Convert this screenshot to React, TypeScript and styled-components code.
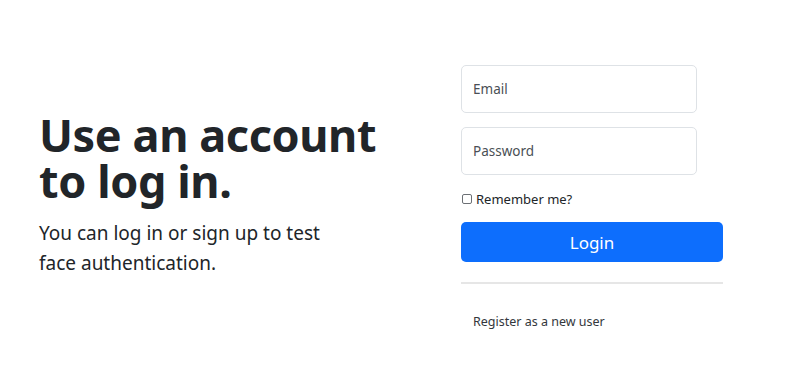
import styled, { createGlobalStyle } from 'styled-components';

const GlobalStyle = createGlobalStyle`
  html, body {
    margin: 0;
    padding: 0;
    background: #ffffff;
  }
  body {
    font-family: "Noto Sans", "Open Sans", sans-serif;
    color: #212529;
  }
  * {
    box-sizing: border-box;
  }
`;

const Page = styled.div`
  width: 806px;
  height: 384px;
  display: flex;
  padding: 65px 0 0 39px;
`;

const Intro = styled.div`
  width: 422px;
  padding-top: 47px;
`;

const Heading = styled.h1`
  margin: 0;
  max-width: 360px;
  font-size: 45px;
  line-height: 46px;
  font-weight: 700;
  letter-spacing: -0.4px;
  color: #212529;
`;

const Lead = styled.p`
  margin: 14px 0 0;
  max-width: 300px;
  font-size: 19px;
  line-height: 30px;
  font-weight: 400;
  color: #212529;
`;

const FormColumn = styled.div`
  width: 262px;
  display: flex;
  flex-direction: column;
`;

const Field = styled.div`
  width: 236px;
  height: 48px;
  border: 1px solid #dee2e6;
  border-radius: 5px;
  display: flex;
  align-items: center;
  padding: 0 11px;
  font-size: 13.5px;
  color: #4a4f55;
  margin-bottom: 14px;
`;

const CheckRow = styled.label`
  display: flex;
  align-items: center;
  gap: 4px;
  font-size: 13px;
  line-height: 20px;
  color: #212529;
`;

const CheckBox = styled.span`
  width: 10px;
  height: 10px;
  border: 1px solid #6c7075;
  border-radius: 2px;
  margin-left: 1px;
  background: #fff;
`;

const LoginButton = styled.button`
  margin-top: 13px;
  width: 262px;
  height: 40px;
  border: none;
  border-radius: 5px;
  background: #0d6efd;
  color: #ffffff;
  font-family: inherit;
  font-size: 17px;
  padding: 0;
`;

const Divider = styled.hr`
  margin: 20px 0 0;
  width: 262px;
  border: none;
  border-top: 2px solid #e6e6e6;
`;

const RegisterLink = styled.a`
  margin-top: 28px;
  padding-left: 12px;
  font-size: 12.5px;
  line-height: 20px;
  color: #33373c;
  text-decoration: none;
`;

export default function App() {
  return (
    <>
      <GlobalStyle />
      <Page>
        <Intro>
          <Heading>Use an account to log in.</Heading>
          <Lead>You can log in or sign up to test face authentication.</Lead>
        </Intro>
        <FormColumn>
          <Field>Email</Field>
          <Field>Password</Field>
          <CheckRow>
            <CheckBox />
            Remember me?
          </CheckRow>
          <LoginButton>Login</LoginButton>
          <Divider />
          <RegisterLink href="#">Register as a new user</RegisterLink>
        </FormColumn>
      </Page>
    </>
  );
}
